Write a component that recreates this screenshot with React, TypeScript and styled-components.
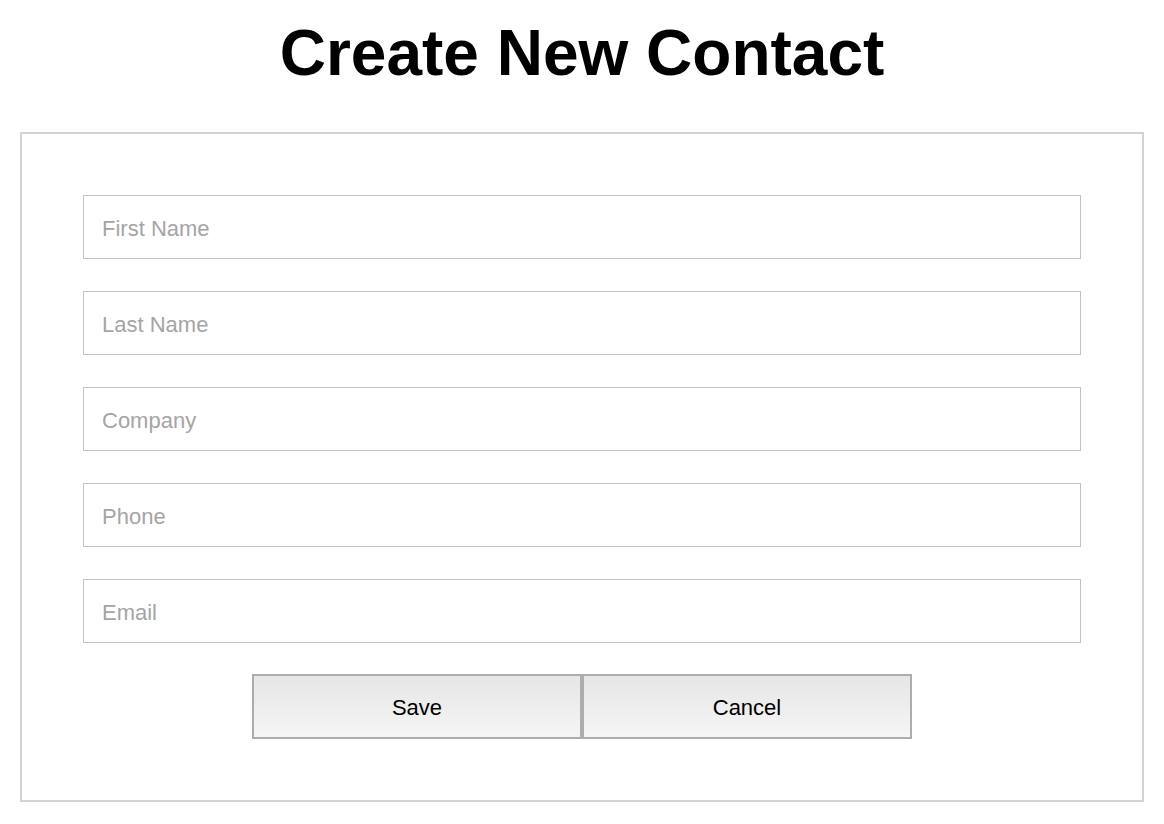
import React from "react";
import styled, { createGlobalStyle } from "styled-components";

const GlobalStyle = createGlobalStyle`
  html, body {
    margin: 0;
    padding: 0;
    background: #ffffff;
  }
  body {
    font-family: "Liberation Sans", Arial, Helvetica, sans-serif;
    color: #000;
  }
  * { box-sizing: border-box; }
`;

const Page = styled.div`
  display: flex;
  flex-direction: column;
  padding: 16px 20px 22px;
`;

const Title = styled.h1`
  margin: 0 0 42px;
  text-align: center;
  font-family: "Liberation Sans", Arial, Helvetica, sans-serif;
  font-weight: 700;
  font-size: 64px;
  line-height: 74px;
`;

const Card = styled.form`
  display: flex;
  flex-direction: column;
  border: 2px solid #d3d3d3;
  padding: 61px;
`;

const Fields = styled.div`
  display: flex;
  flex-direction: column;
  gap: 32px;
`;

const Field = styled.input`
  display: block;
  width: 100%;
  height: 64px;
  border: 1px solid #c4c4c4;
  border-radius: 0;
  padding: 3px 18px 0;
  font-family: "Liberation Sans", Arial, Helvetica, sans-serif;
  font-size: 22px;
  color: #333;
  background: #fff;
  outline: none;
  &::placeholder {
    color: #a5a5a5;
    opacity: 1;
  }
`;

const ButtonRow = styled.div`
  display: flex;
  justify-content: center;
  margin-top: 31px;
`;

const Button = styled.button`
  width: 330px;
  height: 65px;
  border: 2px solid #adadad;
  border-radius: 0;
  background: linear-gradient(to bottom, #e6e6e6, #f5f5f5);
  font-family: "Liberation Sans", Arial, Helvetica, sans-serif;
  font-size: 22px;
  color: #000;
  padding: 3px 0 0;
  cursor: pointer;
`;

const fields = ["First Name", "Last Name", "Company", "Phone", "Email"];

export default function App() {
  return (
    <>
      <GlobalStyle />
      <Page>
        <Title>Create New Contact</Title>
        <Card onSubmit={(e) => e.preventDefault()}>
          <Fields>
            {fields.map((f) => (
              <Field key={f} type="text" placeholder={f} />
            ))}
          </Fields>
          <ButtonRow>
            <Button type="submit">Save</Button>
            <Button type="button">Cancel</Button>
          </ButtonRow>
        </Card>
      </Page>
    </>
  );
}
